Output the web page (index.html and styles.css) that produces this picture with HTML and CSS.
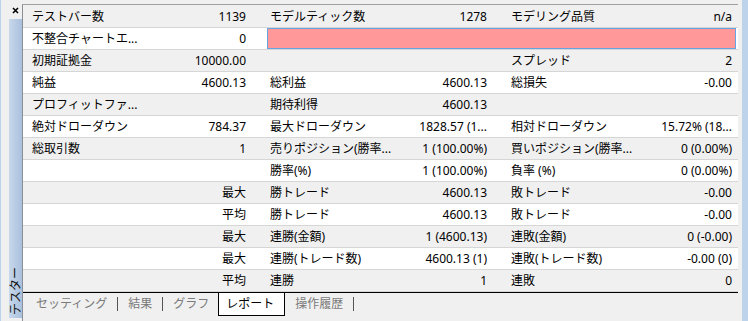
FILE: index.html
```html
<!DOCTYPE html>
<html lang="ja">
<head>
<meta charset="utf-8">
<link rel="stylesheet" href="styles.css">
</head>
<body>
<div class="window">
  <div class="sidebar">
    <svg class="close" width="7" height="7" viewBox="0 0 7 7"><path d="M1 1L6 6M6 1L1 6" stroke="#000" stroke-width="1.6"/></svg>
    <div class="side-tab"><span class="side-label">テスター</span></div>
  </div>
  <div class="main">
    <div class="report">
      <div class="row g"><span class="lbl">テストバー数</span><span class="val">1139</span><span class="lbl">モデルティック数</span><span class="val">1278</span><span class="lbl">モデリング品質</span><span class="val">n/a</span></div>
      <div class="row w"><span class="lbl">不整合チャートエ...</span><span class="val">0</span><span class="errbox"></span></div>
      <div class="row g"><span class="lbl">初期証拠金</span><span class="val">10000.00</span><span class="lbl"></span><span class="val"></span><span class="lbl">スプレッド</span><span class="val">2</span></div>
      <div class="row w"><span class="lbl">純益</span><span class="val">4600.13</span><span class="lbl">総利益</span><span class="val">4600.13</span><span class="lbl">総損失</span><span class="val">-0.00</span></div>
      <div class="row g"><span class="lbl">プロフィットファ...</span><span class="val"></span><span class="lbl">期待利得</span><span class="val">4600.13</span><span class="lbl"></span><span class="val"></span></div>
      <div class="row w"><span class="lbl">絶対ドローダウン</span><span class="val">784.37</span><span class="lbl">最大ドローダウン</span><span class="val">1828.57 (1...</span><span class="lbl">相対ドローダウン</span><span class="val">15.72% (18...</span></div>
      <div class="row g"><span class="lbl">総取引数</span><span class="val">1</span><span class="lbl">売りポジション(勝率...</span><span class="val">1 (100.00%)</span><span class="lbl">買いポジション(勝率...</span><span class="val">0 (0.00%)</span></div>
      <div class="row w"><span class="lbl"></span><span class="val"></span><span class="lbl">勝率(%)</span><span class="val">1 (100.00%)</span><span class="lbl">負率 (%)</span><span class="val">0 (0.00%)</span></div>
      <div class="row g"><span class="lbl"></span><span class="val">最大</span><span class="lbl">勝トレード</span><span class="val">4600.13</span><span class="lbl">敗トレード</span><span class="val">-0.00</span></div>
      <div class="row w"><span class="lbl"></span><span class="val">平均</span><span class="lbl">勝トレード</span><span class="val">4600.13</span><span class="lbl">敗トレード</span><span class="val">-0.00</span></div>
      <div class="row g"><span class="lbl"></span><span class="val">最大</span><span class="lbl">連勝(金額)</span><span class="val">1 (4600.13)</span><span class="lbl">連敗(金額)</span><span class="val">0 (-0.00)</span></div>
      <div class="row w"><span class="lbl"></span><span class="val">最大</span><span class="lbl">連勝(トレード数)</span><span class="val">4600.13 (1)</span><span class="lbl">連敗(トレード数)</span><span class="val">-0.00 (0)</span></div>
      <div class="row g"><span class="lbl"></span><span class="val">平均</span><span class="lbl">連勝</span><span class="val">1</span><span class="lbl">連敗</span><span class="val">0</span></div>
    </div>
    <div class="tabs">
      <span class="tab">セッティング</span><span class="sep"></span>
      <span class="tab">結果</span><span class="sep"></span>
      <span class="tab">グラフ</span>
      <span class="tab active">レポート</span>
      <span class="tab">操作履歴</span><span class="sep"></span>
    </div>
  </div>
  <div class="gap"></div>
  <div class="frame"></div>
</div>
</body>
</html>
```

FILE: styles.css
```css
* { box-sizing: border-box; }
html, body {
  margin: 0;
  padding: 0;
}
body {
  width: 748px;
  height: 321px;
  overflow: hidden;
  background: #f0f0f0;
  font-family: "Noto Sans", "Noto Sans CJK JP", sans-serif;
  font-size: 12px;
  color: #000;
}
.window {
  display: flex;
  width: 748px;
  height: 321px;
}
.sidebar {
  width: 22px;
  flex: none;
  border-left: 1px solid #b9d1ea;
  display: flex;
  flex-direction: column;
  padding-left: 8px;
}
.close {
  display: block;
  margin: 7px 0 0 3px;
}
.side-tab {
  margin-top: 5px;
  width: 13px;
  height: 299px;
  background: linear-gradient(to right, #c8d8ec, #a9c0dc);
  display: flex;
  align-items: flex-end;
  justify-content: center;
  padding-bottom: 3px;
}
.side-label {
  writing-mode: vertical-rl;
  text-orientation: sideways;
  transform: rotate(180deg);
  font-size: 12px;
  line-height: 13px;
  color: #111;
}
.main {
  width: 716px;
  flex: none;
  margin-top: 4px;
  border-top: 1px solid #a0a0a0;
  border-left: 1px solid #8a8f98;
  padding-top: 1px;
  display: flex;
  flex-direction: column;
}
.report {
  display: flex;
  flex-direction: column;
}
.row {
  display: grid;
  grid-template-columns: 127px 117px 133px 108px 132px 98px;
  height: 22px;
  border-bottom: 1px solid #d6d6d6;
  line-height: 21px;
  white-space: nowrap;
}
.row.g { background: #f0f0f0; }
.row.w { background: #ffffff; }
.lbl { padding-left: 3px; overflow: hidden; }
.lbl:first-child { padding-left: 9px; }
.val { text-align: right; padding-right: 21px; overflow: hidden; }
.val:last-child { padding-right: 6px; }
.errbox {
  grid-column: 3 / 7;
  margin-right: 2px;
  background: #ff9999;
  border: 1px solid #66a3e0;
}
.tabs {
  border-top: 1px solid #000;
  height: 24px;
  display: flex;
  align-items: stretch;
  padding-left: 3px;
  color: #7a7a7a;
}
.tab {
  padding: 0 10px;
  line-height: 22px;
}
.sep {
  width: 1px;
  background: #555;
  margin: 4px 0 5px;
}
.tab.active {
  margin-left: -1px;
  padding: 0 10px 0 7px;
  background: #fff;
  color: #000;
  border: 1px solid #000;
  border-top: none;
  height: 23px;
}
.gap {
  width: 4px;
  flex: none;
}
.frame {
  width: 6px;
  flex: none;
  background: #bcd3eb;
}
```
